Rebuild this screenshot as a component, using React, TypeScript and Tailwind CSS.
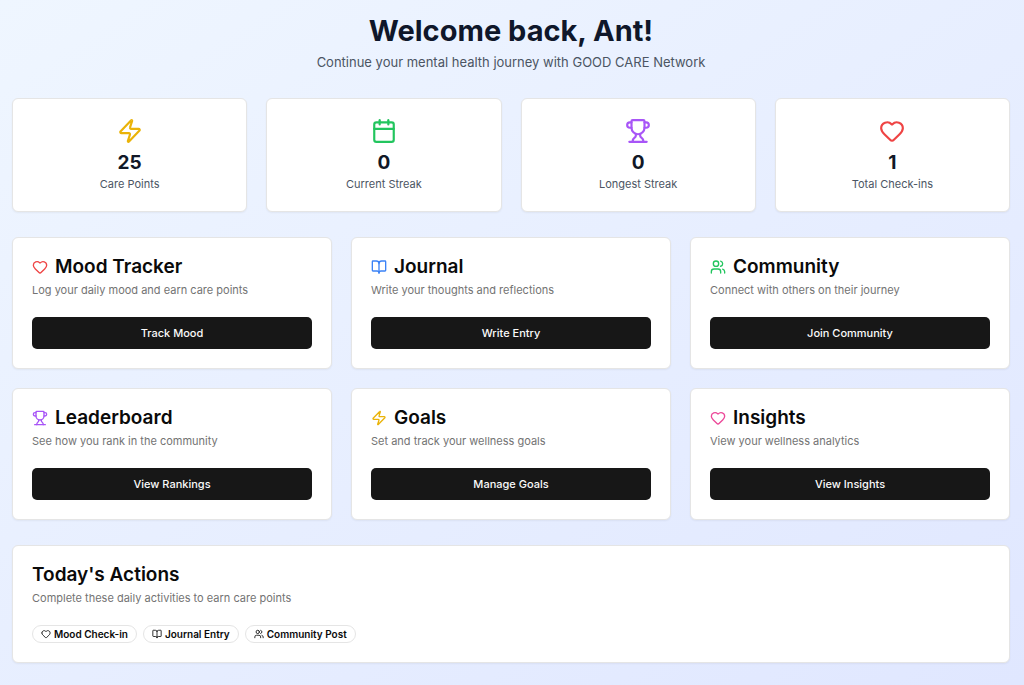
import React from "react";
import { BookOpen, Calendar, Heart, Trophy, Users, Zap, type LucideIcon } from "lucide-react";

interface Stat {
    label: string;
    value: number;
    icon: LucideIcon;
    color: string;
}

interface Feature {
    title: string;
    description: string;
    action: string;
    icon: LucideIcon;
    color: string;
}

const stats: Stat[] = [
    { label: "Care Points", value: 25, icon: Zap, color: "text-[#eab308]" },
    { label: "Current Streak", value: 0, icon: Calendar, color: "text-[#22c55e]" },
    { label: "Longest Streak", value: 0, icon: Trophy, color: "text-[#a855f7]" },
    { label: "Total Check-ins", value: 1, icon: Heart, color: "text-[#ef4444]" },
];

const features: Feature[] = [
    {
        title: "Mood Tracker",
        description: "Log your daily mood and earn care points",
        action: "Track Mood",
        icon: Heart,
        color: "text-[#ef4444]",
    },
    {
        title: "Journal",
        description: "Write your thoughts and reflections",
        action: "Write Entry",
        icon: BookOpen,
        color: "text-[#3b82f6]",
    },
    {
        title: "Community",
        description: "Connect with others on their journey",
        action: "Join Community",
        icon: Users,
        color: "text-[#22c55e]",
    },
    {
        title: "Leaderboard",
        description: "See how you rank in the community",
        action: "View Rankings",
        icon: Trophy,
        color: "text-[#a855f7]",
    },
    {
        title: "Goals",
        description: "Set and track your wellness goals",
        action: "Manage Goals",
        icon: Zap,
        color: "text-[#eab308]",
    },
    {
        title: "Insights",
        description: "View your wellness analytics",
        action: "View Insights",
        icon: Heart,
        color: "text-[#ec4899]",
    },
];

const actions = [
    { label: "Mood Check-in", icon: Heart },
    { label: "Journal Entry", icon: BookOpen },
    { label: "Community Post", icon: Users },
];

const Card: React.FC<{ className?: string; children: React.ReactNode }> = ({ className = "", children }) => (
    <div className={`rounded-md border border-[#e5e5e5] bg-white p-[19px] shadow-xs ${className}`}>{children}</div>
);

const App: React.FC = () => {
    return (
        <div className="min-h-screen bg-linear-to-br from-[#eff6ff] to-[#e0e7ff] pt-3 pr-3.5 pb-5 pl-3 font-['Inter',sans-serif]">
            {/* Header */}
            <header className="mb-[26px] text-center">
                <h1 className="text-[29px] leading-[38px] font-bold text-[#0f172a]">Welcome back, Ant!</h1>
                <p className="mt-0.5 text-[13px] leading-5 text-[#4b5563]">
                    Continue your mental health journey with GOOD CARE Network
                </p>
            </header>

            {/* Stats */}
            <section className="mb-[25px] grid grid-cols-2 gap-[19px] md:grid-cols-4">
                {stats.map((stat) => (
                    <Card key={stat.label} className="text-center">
                        <stat.icon className={`mx-auto mb-1.5 size-[26px] ${stat.color}`} />
                        <div className="text-[19px] leading-[26px] font-bold text-[#111827]">{stat.value}</div>
                        <div className="text-[11px] leading-4 text-[#4b5563]">{stat.label}</div>
                    </Card>
                ))}
            </section>

            {/* Features */}
            <section className="mb-[25px] grid grid-cols-1 gap-[19px] sm:grid-cols-2 md:grid-cols-3">
                {features.map((feature) => (
                    <Card key={feature.title}>
                        <h2 className="flex items-center gap-[7px] text-[19px] leading-5 font-semibold text-[#0a0a0a]">
                            <feature.icon className={`size-4 shrink-0 ${feature.color}`} />
                            {feature.title}
                        </h2>
                        <p className="mt-[5px] text-[11px] leading-4 text-[#737373]">{feature.description}</p>
                        <button
                            type="button"
                            className="mt-[19px] h-8 w-full rounded-[5px] bg-[#171717] text-[11px] font-medium text-[#fafafa] hover:bg-[#2e2e2e]"
                        >
                            {feature.action}
                        </button>
                    </Card>
                ))}
            </section>

            {/* Today's actions */}
            <Card>
                <h2 className="text-[19px] leading-5 font-semibold text-[#0a0a0a]">Today's Actions</h2>
                <p className="mt-[5px] text-[11px] leading-4 text-[#737373]">
                    Complete these daily activities to earn care points
                </p>
                <div className="mt-[19px] flex flex-wrap gap-1.5">
                    {actions.map((action) => (
                        <div
                            key={action.label}
                            className="flex h-[18px] items-center gap-[3px] rounded-full border border-[#e5e5e5] px-2 text-[10px] font-semibold text-[#0a0a0a]"
                        >
                            <action.icon className="size-2.5" />
                            {action.label}
                        </div>
                    ))}
                </div>
            </Card>
        </div>
    );
};

export default App;
